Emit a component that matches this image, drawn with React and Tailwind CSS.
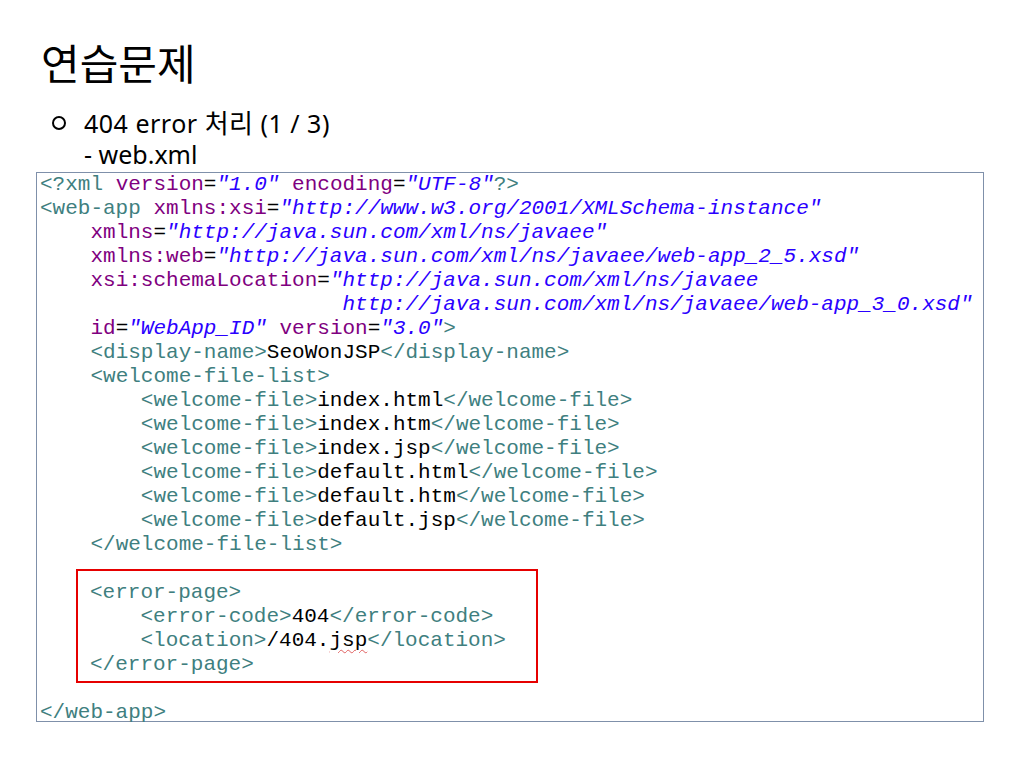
const TAG = "text-[#3f7f7f]";
const ATTR = "text-[#7f007f]";
const VAL = "text-[#2a00ff] italic";
const TXT = "text-black";

// each line: [indent, [[class, text], ...]]
const head = [
  [0, [[TAG, "<?xml "], [ATTR, "version"], [TXT, "="], [VAL, "\"1.0\""], [TAG, " "], [ATTR, "encoding"], [TXT, "="], [VAL, "\"UTF-8\""], [TAG, "?>"]]],
  [0, [[TAG, "<web-app "], [ATTR, "xmlns:xsi"], [TXT, "="], [VAL, "\"http://www.w3.org/2001/XMLSchema-instance\""]]],
  [4, [[ATTR, "xmlns"], [TXT, "="], [VAL, "\"http://java.sun.com/xml/ns/javaee\""]]],
  [4, [[ATTR, "xmlns:web"], [TXT, "="], [VAL, "\"http://java.sun.com/xml/ns/javaee/web-app_2_5.xsd\""]]],
  [4, [[ATTR, "xsi:schemaLocation"], [TXT, "="], [VAL, "\"http://java.sun.com/xml/ns/javaee"]]],
  [24, [[VAL, "http://java.sun.com/xml/ns/javaee/web-app_3_0.xsd\""]]],
  [4, [[ATTR, "id"], [TXT, "="], [VAL, "\"WebApp_ID\""], [TAG, " "], [ATTR, "version"], [TXT, "="], [VAL, "\"3.0\""], [TAG, ">"]]],
  [4, [[TAG, "<display-name>"], [TXT, "SeoWonJSP"], [TAG, "</display-name>"]]],
  [4, [[TAG, "<welcome-file-list>"]]],
  ...["index.html", "index.htm", "index.jsp", "default.html", "default.htm", "default.jsp"].map((f) => [
    8,
    [[TAG, "<welcome-file>"], [TXT, f], [TAG, "</welcome-file>"]],
  ]),
  [4, [[TAG, "</welcome-file-list>"]]],
];

function Line({ indent, parts }) {
  return (
    <div className="h-[24px] whitespace-pre">
      {" ".repeat(indent)}
      {parts.map((p, i) => (
        <span key={i} className={p[0]}>
          {p[1]}
        </span>
      ))}
    </div>
  );
}

export default function App() {
  return (
    <div
      className="w-[1024px] h-[768px] bg-white overflow-hidden text-black"
      style={{ fontFamily: '"Noto Sans", "Noto Sans CJK KR", sans-serif' }}
    >
      <div className="pl-[41px] pt-[37px] text-[42px] leading-[50px]" style={{ fontFamily: '"Noto Sans CJK KR", sans-serif' }}>
        연습문제
      </div>
      <div className="mt-[19px] pl-[52px] flex items-center text-[25px] leading-[32px]">
        <span className="w-[14px] h-[14px] border-2 border-black rounded-full mr-[18px]" />
        <span className="tracking-[0.5px]">
          404 error{" "}
          <span className="text-[26px]" style={{ fontFamily: '"Noto Sans CJK KR", sans-serif' }}>
            처리
          </span>{" "}
          (1 / 3)
        </span>
      </div>
      <div className="pl-[84px] text-[25px] leading-[32px] -mt-[1px]">- web.xml</div>

      <div
        className="ml-[36px] mt-[2px] w-[948px] h-[550px] border border-[#7f90aa] pl-[3px] text-[21px] leading-[24px]"
        style={{ fontFamily: '"Liberation Mono", monospace' }}
      >
        {head.map((l, i) => (
          <Line key={i} indent={l[0]} parts={l[1]} />
        ))}
        <div className="mt-[12px] ml-[36px] w-[462px] border-2 border-[#e60000] pt-[10px] pb-[4px] pl-[12px]">
          <Line indent={0} parts={[[TAG, "<error-page>"]]} />
          <Line indent={4} parts={[[TAG, "<error-code>"], [TXT, "404"], [TAG, "</error-code>"]]} />
          <div className="h-[24px] whitespace-pre">
            {"    "}
            <span className={TAG}>{"<location>"}</span>
            <span className={TXT}>/404.</span>
            <span className={TXT + " underline decoration-wavy decoration-[#e06060] decoration-1 underline-offset-[3px]"}>jsp</span>
            <span className={TAG}>{"</location>"}</span>
          </div>
          <Line indent={0} parts={[[TAG, "</error-page>"]]} />
        </div>
        <div className="mt-[18px]">
          <Line indent={0} parts={[[TAG, "</web-app>"]]} />
        </div>
      </div>
    </div>
  );
}
